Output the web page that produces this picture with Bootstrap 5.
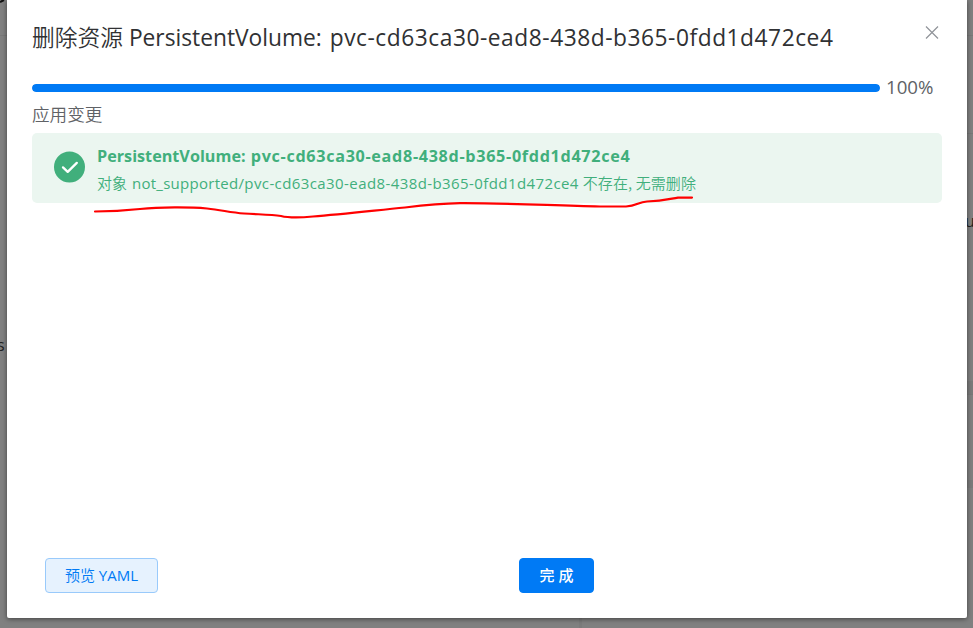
<!DOCTYPE html>
<html lang="zh-CN">
<head>
<meta charset="utf-8">
<title>删除资源</title>
<link href="https://cdn.jsdelivr.net/npm/bootstrap@5.3.0/dist/css/bootstrap.min.css" rel="stylesheet">
<style>
body{background:#808080;font-family:"Open Sans","Noto Sans CJK SC",sans-serif;height:628px;overflow:hidden;color:#606266}
.panel{margin:0 6px 0 7px;height:618px;border-radius:0 0 2px 2px;box-shadow:0 1px 5px rgba(0,0,0,.5);padding:0 25px}
.panel-title{height:74px;font-size:22.75px;line-height:74px;color:#303133;font-weight:400}
.panel-title .uid{letter-spacing:.53px;margin-left:2px}
.close-x{width:14px;height:14px;margin:26px 3px 0 0}
.progress-row{height:27px}
.progress{height:8px;width:848px;border-radius:4px;--bs-progress-bar-bg:#007af5}
.progress-bar{border-radius:4px}
.percent{font-size:18.7px;line-height:26px;margin-left:6px;margin-top:-2px}
.stage{font-size:17.6px;line-height:26px;height:32px}
.result{height:70px;background:#ebf6f0;color:#41af7c;border-radius:5px;padding:0 22px}
.result-head{font-size:16.2px;line-height:27px;font-weight:700}
.result-head .uid{letter-spacing:.67px;margin-left:1px}
.result-text{font-size:15px;line-height:25px}
.result-text .kind{letter-spacing:.28px;margin-left:1px}
.result-text .uid{letter-spacing:.41px}
.result-text .tail{letter-spacing:.1px}
.result-copy{margin-left:12px;height:62px;padding-top:6px}
.cn{font-family:"Noto Sans CJK SC",sans-serif;font-weight:350}
.footer-row{height:35px;margin-top:355px;padding-left:13px}
.footer-row .btn{height:35px;border-radius:4px;font-size:15px;line-height:31px;padding:0}
.footer-row .btn-yaml{width:113px;background:#e6f2fe;border-color:#99cafb;color:#007af5;margin-right:361px;padding-bottom:2px}
.btn-done{width:75px;background:#007af5;border-color:#007af5;color:#fff}
.footer-row .btn-done{font-weight:500}
.ink{left:0;top:0;pointer-events:none}
.edge{font-size:16px;line-height:20px;color:#222;overflow:hidden}
.edge-left{left:0;top:335px;width:7px}
.edge-left span{margin-left:-3px}
.edge-right{left:967px;top:211px;width:6px}
.edge-right span{margin-left:-2px}
</style>
<script src="https://cdn.jsdelivr.net/npm/bootstrap@5.3.0/dist/js/bootstrap.bundle.min.js"></script>
</head>
<body class="position-relative">
<div class="edge edge-left position-absolute"><span>s</span></div>
<div class="edge edge-right position-absolute"><span>u</span></div>
<svg class="ink position-absolute" width="973" height="628"><path d="M0 35.5H7M967 35.5H973M967 133.5H973M967 394.5H973" stroke="#787878"/><path d="M967 381h6v13h-6zM967 480h6v8h-6zM579 618h3v10h-3z" fill="#7b7b7b"/><path d="M0 2L4 0" stroke="#111" stroke-width="2"/></svg>
<main class="panel bg-white position-relative d-flex flex-column">
  <header class="d-flex justify-content-between">
    <h1 class="panel-title m-0 text-nowrap"><span class="cn">删除资源</span> PersistentVolume: <span class="uid">pvc-cd63ca30-ead8-438d-b365-0fdd1d472ce4</span></h1>
    <svg class="close-x" viewBox="0 0 14 14" fill="none" stroke="#909399" stroke-width="1.2"><path d="M1 .5L13 12.5M13 .5L1 12.5"/></svg>
  </header>
  <div class="progress-row d-flex align-items-center">
    <div class="progress"><div class="progress-bar w-100"></div></div>
    <span class="percent">100%</span>
  </div>
  <div class="stage"><span class="cn">应用变更</span></div>
  <section class="result d-flex align-items-center">
    <svg class="mb-1" width="31" height="34" viewBox="0 0 31 34"><circle cx="15.5" cy="18" r="15.5" fill="#41af7c"/><path d="M9 18.4L13.7 22.9L22.8 13.9" fill="none" stroke="#fff" stroke-width="2.3" stroke-linecap="round" stroke-linejoin="round"/></svg>
    <div class="result-copy text-nowrap">
      <div class="result-head">PersistentVolume: <span class="uid">pvc-cd63ca30-ead8-438d-b365-0fdd1d472ce4</span></div>
      <div class="result-text"><span class="cn">对象</span> <span class="kind">not_supported/</span><span class="uid">pvc-cd63ca30-ead8-438d-b365-0fdd1d472ce4</span> <span class="cn tail">不存在, 无需删除</span></div>
    </div>
  </section>
  <footer class="footer-row d-flex">
    <button class="btn btn-yaml" type="button"><span class="cn">预览</span> YAML</button>
    <button class="btn btn-done" type="button">完 成</button>
  </footer>
</main>
<svg class="ink position-absolute" width="973" height="628" fill="none"><path d="M95 211.5C113 211.5 126 210.5 140 209C160 207 190 207 207 208.5C222 210 230 212.5 244 213.5C260 214.5 271 214.5 281 216C289 218 298 218 313 216.500C340 214.500 370 211 405 207.500C430 204.500 442 203.500 460 203.200C510 203 550 205.500 600 206.500H626C637 206 638 202 647 201.500C662 201 667 199.500 678 197.600H692" stroke="#f00" stroke-width="2.2" stroke-linecap="round"/></svg>
</body>
</html>
